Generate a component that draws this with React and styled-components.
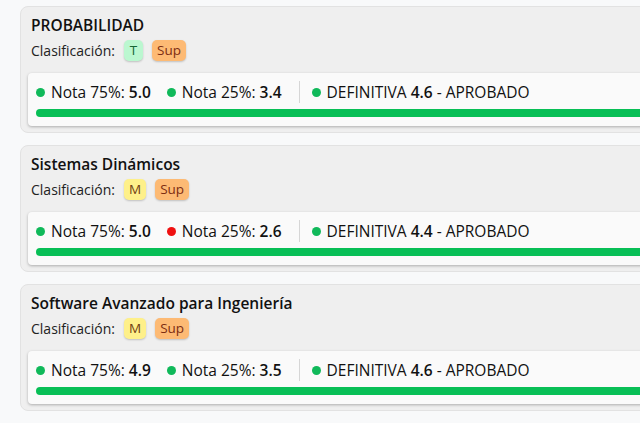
import React from "react";
import styled, { createGlobalStyle } from "styled-components";

const GlobalStyle = createGlobalStyle`
  body {
    margin: 0;
    background: #f8f9fa;
    font-family: "Open Sans", "Noto Sans", sans-serif;
    color: #111;
    overflow: hidden;
  }
`;

const List = styled.div`
  display: flex;
  flex-direction: column;
  gap: 12px;
  padding: 6px 0 0 20px;
`;

const Card = styled.div`
  width: 700px;
  background: #efefef;
  border: 1px solid #e2e2e2;
  border-radius: 8px;
  padding: 7px 7px 6px 7px;
  box-sizing: border-box;
`;

const Header = styled.div`
  padding: 0 3px;
`;

const Title = styled.div`
  font-size: 15.5px;
  font-weight: 600;
  line-height: 22px;
`;

const ClassRow = styled.div`
  display: flex;
  align-items: center;
  gap: 9px;
  font-size: 14px;
  color: #222;
  height: 28px;
  margin-bottom: 9px;
`;

const badgeColors = {
  T: { bg: "#bbf7d0", fg: "#166534" },
  M: { bg: "#fef08a", fg: "#713f12" },
  Sup: { bg: "#fdba74", fg: "#7c2d12" },
};

const Badge = styled.span`
  display: inline-flex;
  align-items: center;
  justify-content: center;
  height: 21px;
  min-width: 19px;
  box-sizing: border-box;
  padding: 0 5px;
  border-radius: 5px;
  font-size: 13.5px;
  background: ${(p) => badgeColors[p.$kind].bg};
  color: ${(p) => badgeColors[p.$kind].fg};
  box-shadow: 0 1px 2px rgba(0, 0, 0, 0.2);
`;

const Panel = styled.div`
  background: #fafafa;
  border-radius: 4px;
  box-shadow: 0 1px 3px rgba(0, 0, 0, 0.28);
  padding: 7px 8px 9px 8px;
`;

const Stats = styled.div`
  display: flex;
  align-items: center;
  font-size: 15.5px;
  height: 24px;
  margin-bottom: 5px;
`;

const Stat = styled.div`
  display: flex;
  align-items: center;
  margin-right: ${(p) => (p.$last ? "0" : "16px")};
  white-space: nowrap;

  b {
    font-weight: 600;
    margin-left: 4px;
  }

  i {
    font-style: normal;
    margin-left: 4px;
  }
`;

const Dot = styled.span`
  width: 9px;
  height: 9px;
  border-radius: 50%;
  background: ${(p) => (p.$bad ? "#ef1010" : "#10b95a")};
  margin-right: 6px;
`;

const Divider = styled.span`
  width: 1px;
  height: 22px;
  background: #d6d6d6;
  margin: 0 12px 0 1px;
`;

const Bar = styled.div`
  height: 8px;
  border-radius: 4px;
  background: #08bf56;
`;

const courses = [
  { name: "PROBABILIDAD", tipo: "T", n75: "5.0", n25: "3.4", def: "4.6" },
  { name: "Sistemas Dinámicos", tipo: "M", n75: "5.0", n25: "2.6", def: "4.4" },
  { name: "Software Avanzado para Ingeniería", tipo: "M", n75: "4.9", n25: "3.5", def: "4.6" },
];

export default function App() {
  return (
    <>
      <GlobalStyle />
      <List>
        {courses.map((c) => (
          <Card key={c.name}>
            <Header>
              <Title>{c.name}</Title>
              <ClassRow>
                Clasificación:
                <Badge $kind={c.tipo}>{c.tipo}</Badge>
                <Badge $kind="Sup">Sup</Badge>
              </ClassRow>
            </Header>
            <Panel>
              <Stats>
                <Stat>
                  <Dot $bad={parseFloat(c.n75) < 3} />
                  Nota 75%:<b>{c.n75}</b>
                </Stat>
                <Stat>
                  <Dot $bad={parseFloat(c.n25) < 3} />
                  Nota 25%:<b>{c.n25}</b>
                </Stat>
                <Divider />
                <Stat $last>
                  <Dot />
                  DEFINITIVA<b>{c.def}</b>
                  <i>- APROBADO</i>
                </Stat>
              </Stats>
              <Bar />
            </Panel>
          </Card>
        ))}
      </List>
    </>
  );
}
